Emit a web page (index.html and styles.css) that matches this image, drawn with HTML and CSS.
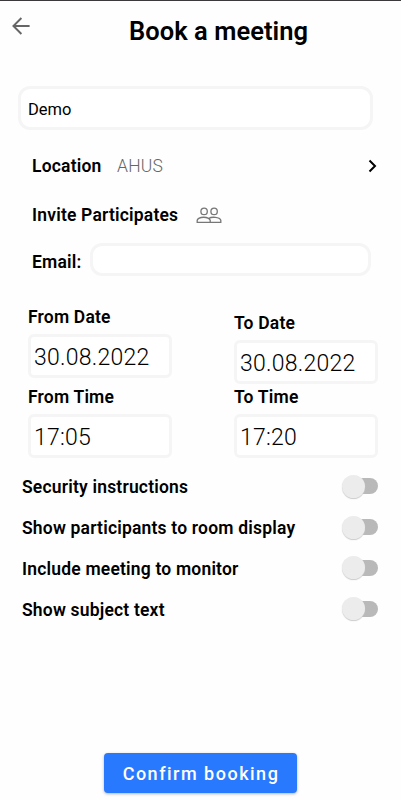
FILE: index.html
```html
<!DOCTYPE html>
<html lang="en">
<head>
    <meta charset="utf-8">
    <meta name="viewport" content="width=device-width, initial-scale=1">
    <title>Book a meeting</title>
    <link rel="stylesheet" href="styles.css">
</head>
<body>
<header class="header">
  <button class="back" type="button" aria-label="Back">
    <svg width="18" height="18" viewBox="0 0 18 18"><path d="M9.4 1L1.4 9l8 8M1.4 9h16.2"/></svg>
  </button>
  <h1>Book a meeting</h1>
</header>
<form class="booking">
  <input class="subject" type="text" value="Demo" aria-label="Subject">
  <div class="row location">
    <span class="label location-label">Location</span>
    <span class="place">AHUS</span>
    <svg class="chevron" width="9" height="14" viewBox="0 0 9 14"><path d="M1.5 1.5L7 7l-5.5 5.5"/></svg>
  </div>
  <div class="row invite">
    <span class="label invite-label">Invite Participates</span>
    <svg class="people" width="26" height="17" viewBox="0 0 26 17">
      <circle cx="8.1" cy="4.4" r="3.2"/>
      <circle cx="18.1" cy="4.4" r="3.2"/>
      <path d="M1.2 15.4v-2.1c1.2-4.1 11.6-4.1 13 0v2.1zM12.6 11.6c2.9-2.1 11-1.8 12.2 1.7v2.1H14.2"/>
    </svg>
  </div>
  <div class="row email-row">
    <label class="label email-label" for="email">Email:</label>
    <input class="email" type="text" id="email">
  </div>
  <div class="dates">
    <div class="field">
      <label class="label" for="fromDate">From Date</label>
      <input type="text" id="fromDate" value="30.08.2022">
    </div>
    <div class="field to-date">
      <label class="label" for="toDate">To Date</label>
      <input type="text" id="toDate" value="30.08.2022">
    </div>
    <div class="field">
      <label class="label" for="fromTime">From Time</label>
      <input type="text" id="fromTime" value="17:05">
    </div>
    <div class="field">
      <label class="label" for="toTime">To Time</label>
      <input type="text" id="toTime" value="17:20">
    </div>
  </div>
  <div class="options">
    <div class="option"><span class="label">Security instructions</span><span class="switch"></span></div>
    <div class="option"><span class="label">Show participants to room display</span><span class="switch"></span></div>
    <div class="option"><span class="label">Include meeting to monitor</span><span class="switch"></span></div>
    <div class="option"><span class="label">Show subject text</span><span class="switch"></span></div>
  </div>
  <button class="confirm" type="button">Confirm booking</button>
</form>
</body>
</html>
```

FILE: styles.css
```css
* {
  box-sizing: border-box;
}
body {
  display: flex;
  flex-direction: column;
  height: 800px;
  margin: 0;
  border-top: 1px solid #3c393c;
  background-color: #fefefe;
  color: #000;
  font-family: Roboto, sans-serif;
  overflow: hidden;
}
input,button {
  margin: 0;
  font-family: inherit;
  color: inherit;
  outline: none;
}
svg {
  display: block;
  fill: none;
}
.header {
  display: flex;
  align-items: flex-start;
  height: 85px;
  padding-left: 12px;
}
.back {
  width: 19px;
  height: 18px;
  margin-top: 16px;
  padding: 0;
  border: 0;
  background: none;
}
.back svg {
  stroke: #666;
  stroke-width: 1.9;
}
h1 {
  margin: 14px 0 0 98px;
  font-size: 25.5px;
  font-weight: 600;
  letter-spacing: .05px;
  line-height: 32px;
  white-space: nowrap;
}
.booking {
  display: flex;
  flex: 1;
  flex-direction: column;
}
.booking input {
  border: 3px solid #f5f5f5;
  background-color: #fff;
}
.label {
  font-size: 17.5px;
  font-weight: 600;
  letter-spacing: .19px;
  line-height: 20px;
  white-space: nowrap;
}
.booking .subject {
  width: 355px;
  height: 44px;
  margin-left: 17.5px;
  padding: 2px 7px 0 7.5px;
  border-radius: 12px;
  font-size: 16.5px;
}
.row {
  display: flex;
  align-items: center;
  padding-left: 32px;
}
.location {
  height: 20px;
  margin-top: 26px;
  padding-right: 24px;
}
.location-label {
  width: 85px;
}
.place {
  color: #666;
  font-size: 17.5px;
  font-weight: 300;
  letter-spacing: .2px;
}
.chevron {
  margin-left: auto;
  stroke: #000;
  stroke-width: 2;
}
.invite {
  height: 20px;
  margin-top: 29px;
}
.invite-label {
  width: 164px;
}
.people {
  stroke: #777;
  stroke-width: 1.3;
}
.email-row {
  height: 33px;
  margin-top: 18px;
}
.email-label {
  width: 58px;
  padding-top: 5px;
}
.booking .email {
  width: 281px;
  height: 33px;
  border-radius: 12px;
}
.dates {
  display: grid;
  grid-template-columns: 144px 144px;
  column-gap: 62px;
  row-gap: 3px;
  margin: 31px 0 0 28px;
}
.field {
  display: flex;
  flex-direction: column;
  gap: 7px;
}
.to-date {
  padding-top: 6px;
}
.field input {
  width: 144px;
  height: 44px;
  padding: 2px 3px 0;
  border-radius: 6px;
  font-size: 23px;
  font-weight: 350;
  letter-spacing: .25px;
}
.options {
  display: flex;
  flex-direction: column;
  margin: 9px 23px 0 22px;
}
.option {
  display: flex;
  align-items: center;
  justify-content: space-between;
  height: 40.8px;
}
.switch {
  display: flex;
  align-items: center;
  width: 29px;
  height: 16px;
  margin-bottom: 2px;
  border-radius: 8px;
  background-color: #b9b9b9;
}
.switch::before {
  content: "";
  flex: none;
  width: 23px;
  height: 23px;
  margin-left: -7px;
  border-radius: 50%;
  background-color: #ececec;
  box-shadow: 0 1px 1px #ccc;
}
.confirm {
  align-self: center;
  width: 193px;
  height: 40px;
  margin-top: auto;
  margin-bottom: 7px;
  padding: 0 0 0 1px;
  border: 0;
  border-radius: 4px;
  background-color: #2979ff;
  box-shadow: 0 1px 3px rgba(0, 0, 0, .3);
  color: #fff;
  font-size: 18px;
  font-weight: 500;
  letter-spacing: 1.5px;
}
```
